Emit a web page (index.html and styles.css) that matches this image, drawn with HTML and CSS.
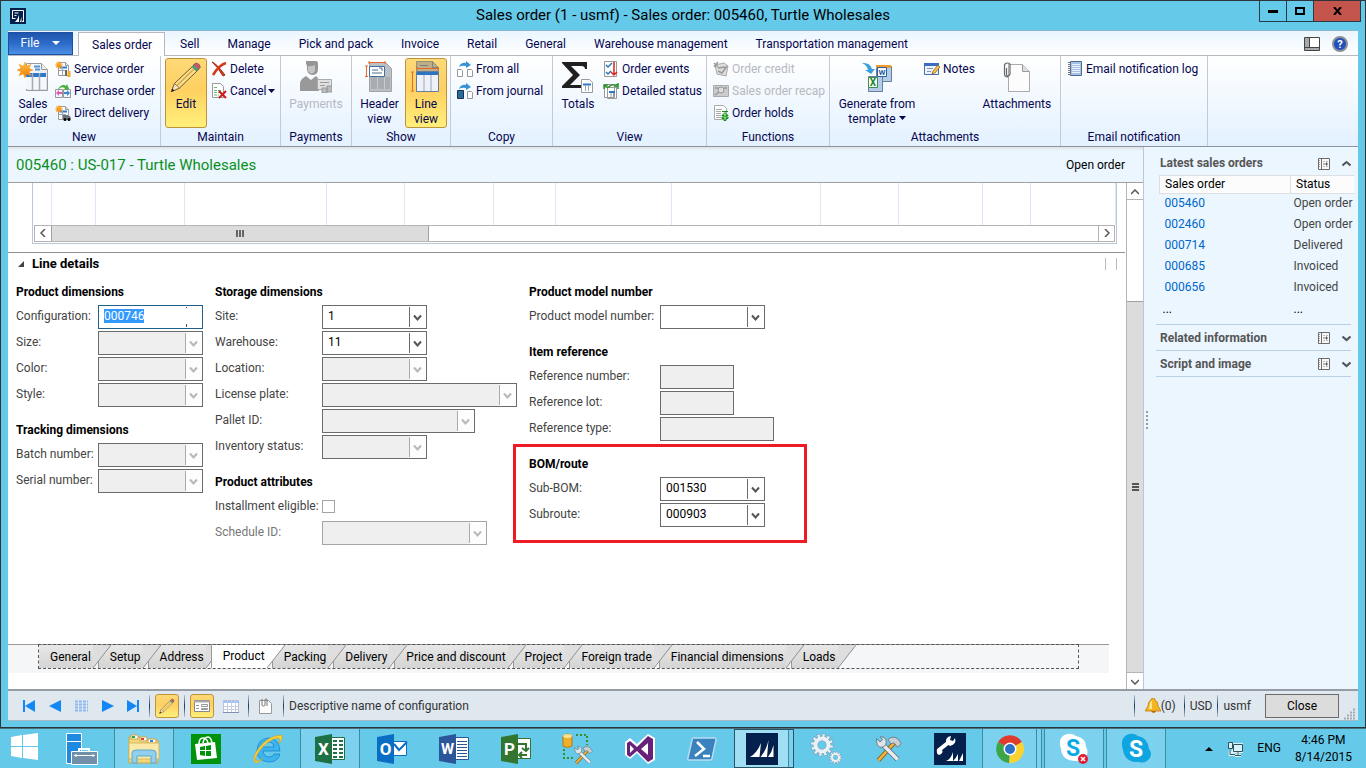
FILE: index.html
```html
<!DOCTYPE html>
<html lang="en">
<head>
    <meta charset="utf-8">
    <title>Sales order (1 - usmf) - Sales order: 005460, Turtle Wholesales</title>
    <link rel="stylesheet" href="styles.css">
</head>
<body>
    <!-- shared icons -->
    <svg class="sprite" width="0" height="0">
        <defs>
            <linearGradient id="orange" x1="0" y1="0" x2="0" y2="1"><stop offset="0" stop-color="#ffc04a"/><stop offset="1" stop-color="#f07c00"/></linearGradient>
            <linearGradient id="paper" x1="0" y1="0" x2="1" y2="1"><stop offset="0" stop-color="#fff"/><stop offset="1" stop-color="#d9dde6"/></linearGradient>
        </defs>
        <symbol id="page" viewBox="0 0 16 16"><path d="M3.500 1.500h7l3 3v10h-10z" fill="#fdfdfd" stroke="#9a9a9a"/><path d="M10.500 1.500v3h3" fill="#ddd" stroke="#9a9a9a"/></symbol>
        <symbol id="star" viewBox="0 0 16 16"><path d="M8 0l1.700 4.200L14 2.300l-1.900 4L16 8l-3.900 1.700 1.900 4-4.300-1.900L8 16l-1.700-4.200L2 13.700l1.900-4L0 8l3.900-1.700L2 2.300l4.300 1.900z" fill="url(#orange)" stroke="#f59a1b" stroke-width=".5"/></symbol>
        <symbol id="pencil" viewBox="0 0 32 32"><path d="M1.500 30.500l3-8L24 4q4 0 5 4L9.500 27z" fill="#fbe08a" stroke="#6b5433"/><path d="M7 24.500L25 7" stroke="#d9a548" stroke-width="1.500"/><path d="M4.500 22.500l5 4.500-8 3.500z" fill="#f7e3bd" stroke="#6b5433" stroke-width=".7"/><path d="M1 31l1.300-3.500 2.200 2z" fill="#222"/><path d="M23.500 4l2-2q4 0 5 4l-2 2.500z" fill="#c8596a" stroke="#8a3a48" stroke-width=".6"/><path d="M21.500 6l2-2 5 4.500-2 2z" fill="#4f9a74"/></symbol>
        <symbol id="gear" viewBox="0 0 24 24"><circle cx="12" cy="12" r="9.500" fill="none" stroke="#7d94a5" stroke-width="4" pathLength="24" stroke-dasharray="1.300 .7"/><circle cx="12" cy="12" r="6.500" fill="none" stroke="#7d94a5" stroke-width="5"/><circle cx="12" cy="12" r="9" fill="none" stroke="#eaf1f6" stroke-width="4" pathLength="24" stroke-dasharray=".9 1.100" stroke-dashoffset="-.2"/><circle cx="12" cy="12" r="6.500" fill="none" stroke="#eaf1f6" stroke-width="4"/></symbol>
        <symbol id="tools" viewBox="0 0 32 32"><path d="M5 29L24 8" stroke="#8a5a10" stroke-width="5"/><path d="M5 29L23 9" stroke="#f0b43c" stroke-width="3"/><path d="M16 5q6-5 12 0l3 5-4 4-4-5-4 1z" fill="#c9d0d8" stroke="#6a737d"/><path d="M9 10l18 18" stroke="#66717c" stroke-width="6"/><path d="M9 10l18 18" stroke="#e7ebef" stroke-width="4"/><path d="M3 8V4l4 4 3-3-3-3q7 0 7 6t-7 6q-4-1-4-6z" fill="#dfe4e9" stroke="#66717c"/></symbol>
        <symbol id="panel" viewBox="0 0 12 12"><path d="M.5.5h11v11H.5z" fill="#f8f8f8" stroke="#6c6c6c"/><path d="M3.500 0v12" stroke="#6c6c6c"/><path d="M1.500 2v8" stroke="#aaa" stroke-dasharray="1 1"/><path d="M5 3.500h5M5 8.500h5" stroke="#bbb" stroke-dasharray="2 1"/><path d="M5 6h3" stroke="#777"/><path d="M8 4l2 2-2 2z" fill="#555"/></symbol>
        <symbol id="down" viewBox="0 0 9 7"><path d="M.5 1.500l4 3.500 4-3.500" fill="none" stroke="#555" stroke-width="2.200"/></symbol>
        <symbol id="ax" viewBox="0 0 32 32"><path d="M0 0h32v32H0z" fill="#04204c"/><path d="M4 24q7-4 11-14l-1.500 14zM14.500 24q6-7 8-17l-1.500 17zM22 24q4-5 5.500-12V24zM4 25h23.500" fill="#fff"/></symbol>
    </svg>

    <div class="window">
        <header class="titlebar">
            <svg class="app-icon" width="16" height="16" viewBox="0 0 16 16"><path d="M0 0h16v16H0z" fill="#04204c"/><path d="M2.500 11V2.500h11V11M4.500 5h4M4.500 7.500h2M2.500 10.500h3" fill="none" stroke="#fff"/><path d="M5 14q3-3 4-7v7zM10 14l1.500-5V14zM12 14l2-4v4z" fill="#fff"/></svg>
            <h1 class="title">Sales order (1 - usmf) - Sales order: 005460, Turtle Wholesales</h1>
            <div class="window-buttons">
                <button type="button" aria-label="Minimize"><svg width="10" height="10"><path d="M0 5h10v3H0z"/></svg></button>
                <button type="button" aria-label="Maximize"><svg width="10" height="8"><path d="M1 1h8v6H1z" fill="none" stroke="#000" stroke-width="2"/></svg></button>
                <button type="button" class="close-window" aria-label="Close window"><svg width="9" height="8" viewBox="0 0 9 8"><path d="M1 0l7 8M8 0L1 8" stroke="#000" stroke-width="2"/></svg></button>
            </div>
        </header>

        <div class="client">
            <nav class="ribbon-tabs">
                <button type="button" class="file-tab">File <svg width="8" height="4"><path d="M0 0h8L4 4z" fill="#fff"/></svg></button>
                <button type="button" class="tab active">Sales order</button>
                <button type="button" class="tab">Sell</button>
                <button type="button" class="tab">Manage</button>
                <button type="button" class="tab">Pick and pack</button>
                <button type="button" class="tab">Invoice</button>
                <button type="button" class="tab">Retail</button>
                <button type="button" class="tab">General</button>
                <button type="button" class="tab">Warehouse management</button>
                <button type="button" class="tab">Transportation management</button>
                <div class="tabs-right">
                    <button type="button" class="plain" aria-label="Layout"><svg width="16" height="14"><path d="M.5.500h15v13H.5z" fill="#fff" stroke="#444"/><path d="M1 1h4v9H1zM1 11h14v2H1z" fill="#a6a9ad"/><path d="M5.500 0v10M0 10.500h16" stroke="#444"/></svg></button>
                    <button type="button" class="plain" aria-label="Help"><svg width="16" height="16"><circle cx="8" cy="8" r="7" fill="#2350b8" stroke="#8a8f99" stroke-width="2"/><text x="8" y="12" text-anchor="middle" font-size="11" font-weight="bold" fill="#fff">?</text></svg></button>
                </div>
            </nav>

            <div class="ribbon">
                <section class="group group-new">
                    <div class="group-body">
                        <button type="button" class="big"><svg width="32" height="32"><path d="M9.500 2.500h15l6 6v21h-21z" fill="url(#paper)" stroke="#9b9b9b"/><path d="M24.500 2.500v6h6" fill="#eee" stroke="#9b9b9b"/><path d="M17 5.500h6M18 8.500h5" stroke="#4d93d8" stroke-width="2"/><path d="M9 12h20v4H9z" fill="#2b78c8"/><path d="M9 16h20v12H9z" fill="#f4f7fb"/><path d="M15.500 12v17M22.500 12v17" stroke="#a4acb8" stroke-width="1.500"/><use href="#star" x="0" y="1" width="16" height="16"/></svg><span>Sales<br>order</span></button>
                        <div class="stack">
                            <button type="button" class="small"><svg width="16" height="16"><use href="#page"/><path d="M5 6.500h7" stroke="#2b78c8" stroke-width="2"/><path d="M7.500 6v8M4 9.500h7" stroke="#9aa4b2"/><use href="#star" width="8" height="8"/><path d="M11 9v6" stroke="#666" stroke-width="2"/><path d="M14 10v6" stroke="#eab02c" stroke-width="3"/></svg>Service order</button>
                            <button type="button" class="small"><svg width="16" height="16"><path d="M.5 6.500h7v8h-7zM8.500 6.500h7v8h-7z" fill="#f5f5f8" stroke="#999"/><path d="M3 6q4-6 8-3l1-2 2 5-5 1 1-2q-4-2-6 1z" fill="#48ae3a"/><path d="M1 10l3-3v2h3v2H4v2z" fill="#e05bb8"/><path d="M9 9h3V7l3 3-3 3v-2H9z" fill="#3388d0"/></svg>Purchase order</button>
                            <button type="button" class="small"><svg width="16" height="16"><use href="#page"/><path d="M5 6.500h7" stroke="#2b78c8" stroke-width="2"/><path d="M7.500 6v8M4 9.500h7" stroke="#9aa4b2"/><use href="#star" width="8" height="8"/><path d="M8 10h5v4H8zM13 11h2l1 3h-3z" fill="#6f747c"/><circle cx="10" cy="14.500" r="1.500"/><circle cx="14" cy="14.500" r="1.500"/></svg>Direct delivery</button>
                        </div>
                    </div>
                    <h2>New</h2>
                </section>
                <section class="group group-maintain">
                    <div class="group-body">
                        <button type="button" class="big pressed"><svg width="32" height="32"><use href="#pencil"/></svg><span>Edit</span></button>
                        <div class="stack">
                            <button type="button" class="small"><svg width="16" height="16"><path d="M1 1q4 1 13 13l-2 1Q6 5 1 1z" fill="#d63a1c" stroke="#a82a14"/><path d="M15 2Q8 4 2 14" fill="none" stroke="#d63a1c" stroke-width="2.500"/></svg>Delete</button>
                            <button type="button" class="small"><svg width="16" height="16"><path d="M1.500.500h8l3 3v11h-11z" fill="#fff" stroke="#999"/><path d="M3 4.500h4M3 7.500h7M3 9.500h7M3 12h5" stroke="#6db56b" stroke-dasharray="3 1"/><path d="M8 8l7 7M15 8l-7 7" stroke="#d11a1a" stroke-width="2"/></svg>Cancel<svg class="arrow" width="7" height="4"><path d="M0 0h7L3.500 4z"/></svg></button>
                        </div>
                    </div>
                    <h2>Maintain</h2>
                </section>
                <section class="group group-payments">
                    <div class="group-body">
                        <button type="button" class="big wide" disabled><svg width="32" height="32"><path d="M6 0h10q2 0 2 3v5q0 6-6 6-5-1-5-6 0-5-1-5z" fill="#969696"/><path d="M8 5q3 1 7-1v6q-3 5-7 0z" fill="#c4c4c4"/><path d="M0 30V23q0-5 6-8l5 4 5-4q3 2 3 8v7z" fill="#999"/><path d="M17.500 18.500h14v10h-14z" fill="#e1e1e1" stroke="#aaa"/><path d="M20 21.500h9M20 24.500h5" stroke="#999"/><path d="M22 27h5v5h-5zM27 25h5v6h-5z" fill="#bbb" stroke="#999"/></svg><span>Payments</span></button>
                    </div>
                    <h2>Payments</h2>
                </section>
                <section class="group group-show">
                    <div class="group-body">
                        <button type="button" class="big medium"><svg width="32" height="32"><path d="M5.500 1.500h16l6 6v23h-22z" fill="#bcc0c5" stroke="#a0a4a8"/><path d="M7 16h19v12H7z" fill="#a8adb3"/><path d="M13.500 16v12M20.500 16v12" stroke="#c7cacf"/><path d="M5.500 5.500h15v10h-15z" fill="#fff" stroke="#446f9d"/><path d="M8 9h6M8 12h10M15 7h3v3" stroke="#446f9d" fill="none"/><path d="M5 1.500h16M5 0v3M21 0v3M2.500 5v10M1 5h3M1 15.500h3" stroke="#e8682c"/></svg><span>Header<br>view</span></button>
                        <button type="button" class="big pressed"><svg width="32" height="32"><path d="M6.500.500h16l6 6v23h-22z" fill="#bdae88" stroke="#99906f"/><path d="M10 4.500h8M22.500.500v6h6" stroke="#77818a" fill="none"/><path d="M6.500 10.500h22v20h-22z" fill="#eef1f8" stroke="#667d9f"/><path d="M7 11h21v3H7z" fill="#2c73c0"/><path d="M14 14v16M21 14v16" stroke="#9aa5bb"/><path d="M7 7.500h21M7.500 6v3M28 6v3M2.500 11v19M1 11h3M1 30h3" stroke="#e8682c"/></svg><span>Line<br>view</span></button>
                    </div>
                    <h2>Show</h2>
                </section>
                <section class="group group-copy">
                    <div class="group-body">
                        <div class="stack">
                            <button type="button" class="small"><svg width="16" height="16"><path d="M.5 8.500h4l1 1v6h-5zM10.500 8.500h4l1 1v6h-5z" fill="#fff" stroke="#999"/><path d="M2 6q2-5 7-4V0l5 4-5 3V5Q5 4 2 6z" fill="#3593d4"/></svg>From all</button>
                            <button type="button" class="small"><svg width="16" height="16"><path d="M.5 7.500h6v8h-6z" fill="#246d9e" stroke="#1a3450"/><path d="M10.500 8.500h4l1 1v6h-5z" fill="#fff" stroke="#999"/><path d="M2 6q2-5 7-4V0l5 4-5 3V5Q5 4 2 6z" fill="#3593d4"/></svg>From journal</button>
                        </div>
                    </div>
                    <h2>Copy</h2>
                </section>
                <section class="group group-view">
                    <div class="group-body">
                        <button type="button" class="big"><svg width="32" height="32"><path d="M0 1h25v7h-2q0-3-4-3H9l9 9L8 24h12v3H0v-2l11-11L0 2z" fill="#202020"/><path d="M19.500 18.500h8l3 3v10h-11z" fill="#fff" stroke="#999"/><path d="M21 23.500h8" stroke="#2b78c8" stroke-width="2"/><path d="M23.500 24v6M26.500 24v6" stroke="#9aa4b2"/></svg><span>Totals</span></button>
                        <div class="stack">
                            <button type="button" class="small"><svg width="16" height="16"><path d="M1.500.500h12v15h-12z" fill="#fff" stroke="#999"/><path d="M3 4l2 2 4-4M3 11l2 2 3-3" fill="none" stroke="#2479bd" stroke-width="1.500"/><path d="M11 1v12M8 11l3 3 3-3" fill="none" stroke="#d22" stroke-width="1.500"/></svg>Order events</button>
                            <button type="button" class="small"><svg width="16" height="16"><path d="M1.500 1.500h10v13h-10zM4.500 4.500h9v11h-9z" fill="#fff" stroke="#999"/><path d="M6 9h6" stroke="#2b78c8" stroke-width="2"/><path d="M8 10v4M10.500 10v4" stroke="#999"/><path d="M1 2q3 4 6 1t7 1M1 6V2h4M15 6V1l-4 2" fill="none" stroke="#2f8f2b" stroke-width="1.500"/></svg>Detailed status</button>
                        </div>
                    </div>
                    <h2>View</h2>
                </section>
                <section class="group group-functions">
                    <div class="group-body">
                        <div class="stack">
                            <button type="button" class="small" disabled><svg width="16" height="16"><path d="M2 4l9-2 4 3-2 10-9-2z" fill="#ddd" stroke="#aaa"/><path d="M5 7l7-1M5 10l4 2 5-7M1 2l4 4M5 1L1 6" fill="none" stroke="#999" stroke-width="1.500"/></svg>Order credit</button>
                            <button type="button" class="small" disabled><svg width="16" height="16"><path d="M.5 2.500h15v11H.5z" fill="#ccc" stroke="#aaa"/><circle cx="8" cy="7" r="3" fill="#ddd" stroke="#999"/><path d="M6 9l-4 3M11 5h3M2 5h3" stroke="#999" stroke-width="1.500"/></svg>Sales order recap</button>
                            <button type="button" class="small"><svg width="16" height="16"><path d="M1.500.500h9l3 3v11h-12z" fill="#fff" stroke="#aaa"/><path d="M3 4.500h6M3 6.500h5M3 8.500h5M3 10.500h5M3 12.500h5" stroke="#aaa"/><path d="M9 6.500h6M12 7.500l3 3h-2v1.500h2v1.500h-2v2h-2v-2H9V12h2v-1.500H9z" fill="#7fe07a" stroke="#178a17"/></svg>Order holds</button>
                        </div>
                    </div>
                    <h2>Functions</h2>
                </section>
                <section class="group group-attachments">
                    <div class="group-body">
                        <button type="button" class="big generate"><svg width="32" height="32"><path d="M15.500 5.500h15v15h-15z" fill="#b4cce6" stroke="#667fa3"/><path d="M15 4h15v3H15z" fill="#f39a2b"/><path d="M7.500 15.500h14v15h-14z" fill="#b4cce6" stroke="#667fa3"/><path d="M16.500 6.500h9v9h-9z" fill="#fff" stroke="#2d5fa5"/><path d="M7.500 16.500h9v10h-9z" fill="#fff" stroke="#38914a"/><text x="21" y="14" text-anchor="middle" font-size="8" font-weight="bold" fill="#2d5fa5">W</text><text x="12" y="25" text-anchor="middle" font-size="10" font-weight="bold" fill="#23842f">X</text><path d="M1 2q8-1 10 6h3l-4 5-6-4h3Q6 4 1 2z" fill="#3c9fdd"/></svg><span>Generate from<br>template <svg class="arrow" width="7" height="4"><path d="M0 0h7L3.500 4z"/></svg></span></button>
                        <div class="stack">
                            <button type="button" class="small"><svg width="16" height="16"><path d="M.5 2.500h14v11H.5z" fill="#eef2fb" stroke="#4b6da8"/><path d="M0 2h15v3H0z" fill="#3a6cc0"/><path d="M3 7.500h6M3 10.500h4" stroke="#8297bd"/><path d="M8 13l1-3 5-6 2 2-5 6z" fill="#f2c24a" stroke="#7c5a1c" stroke-width=".7"/></svg>Notes</button>
                        </div>
                        <button type="button" class="big attach"><svg width="32" height="32"><path d="M7.500 3.500h14l7 7v20h-21z" fill="#fcfcfc" stroke="#aaa"/><path d="M21.500 3.500v7h7" fill="#ddd" stroke="#999"/><path d="M5.500 7v6q0 2 1.500 2t2-2V4q0-2-2.500-2T3.500 4v9q0 3 3.500 3" fill="none" stroke="#666" stroke-width="1.200"/></svg><span>Attachments</span></button>
                    </div>
                    <h2>Attachments</h2>
                </section>
                <section class="group group-email">
                    <div class="group-body">
                        <div class="stack">
                            <button type="button" class="small"><svg width="16" height="16"><path d="M3.500.500h11v14h-11z" fill="#a8c2e4" stroke="#4d6a98"/><path d="M5 3.500h8M5 5.500h8M5 7.500h8M5 9.500h8M5 11.500h8" stroke="#e9f1fb"/><path d="M2.500 1v14" stroke="#777" stroke-width="3" stroke-dasharray="1 1"/></svg>Email notification log</button>
                        </div>
                    </div>
                    <h2>Email notification</h2>
                </section>
            </div>

            <div class="workspace">
                <main class="form">
                    <div class="record-header">
                        <span class="record-title">005460 : US-017 - Turtle Wholesales</span>
                        <span>Open order</span>
                    </div>
                    <div class="form-scroll">
                        <div class="form-body">
                            <div class="lines">
                                <table class="line-grid" aria-label="Sales order lines">
                                    <colgroup><col class="c18"><col class="c44"><col class="c89"><col class="c142"><col class="c78"><col class="c89"><col class="c62"><col class="c116"><col class="c149"><col class="c78"><col class="c84"><col class="c48"><col></colgroup>
                                    <tr><td></td><td></td><td></td><td></td><td></td><td></td><td></td><td></td><td></td><td></td><td></td><td></td><td></td></tr>
                                </table>
                                <div class="hscroll">
                                    <button type="button" aria-label="Scroll left"><svg width="6" height="8"><path d="M5 0L1 4l4 4" fill="none" stroke="#555" stroke-width="1.500"/></svg></button>
                                    <div class="hthumb"><svg width="8" height="7"><path d="M1 0v7M4 0v7M7 0v7" stroke="#666" stroke-width="2"/></svg></div>
                                    <button type="button" class="end" aria-label="Scroll right"><svg width="6" height="8"><path d="M1 0l4 4-4 4" fill="none" stroke="#555" stroke-width="1.500"/></svg></button>
                                </div>
                            </div>

                            <div class="details-head">
                                <svg width="6" height="6"><path d="M6 0v6H0z" fill="#444"/></svg>
                                <h2>Line details</h2>
                                <span class="marks"></span>
                            </div>

                            <form class="fields">
                                <div class="column col-product">
                                    <fieldset>
                                        <legend>Product dimensions</legend>
                                        <div class="row"><label for="configuration">Configuration:</label><input id="configuration" class="box current" type="text" value="000746"></div>
                                        <div class="row"><label for="size">Size:</label><select id="size" class="box" disabled></select></div>
                                        <div class="row"><label for="color">Color:</label><select id="color" class="box" disabled></select></div>
                                        <div class="row"><label for="style">Style:</label><select id="style" class="box" disabled></select></div>
                                    </fieldset>
                                    <fieldset>
                                        <legend>Tracking dimensions</legend>
                                        <div class="row"><label for="batch">Batch number:</label><select id="batch" class="box" disabled></select></div>
                                        <div class="row"><label for="serial">Serial number:</label><select id="serial" class="box" disabled></select></div>
                                    </fieldset>
                                </div>
                                <div class="column col-storage">
                                    <fieldset>
                                        <legend>Storage dimensions</legend>
                                        <div class="row"><label for="site">Site:</label><select id="site" class="box"><option>1</option></select></div>
                                        <div class="row"><label for="warehouse">Warehouse:</label><select id="warehouse" class="box"><option>11</option></select></div>
                                        <div class="row"><label for="location">Location:</label><select id="location" class="box" disabled></select></div>
                                        <div class="row"><label for="plate">License plate:</label><select id="plate" class="box w195" disabled></select></div>
                                        <div class="row"><label for="pallet">Pallet ID:</label><select id="pallet" class="box w153" disabled></select></div>
                                        <div class="row"><label for="inventory">Inventory status:</label><select id="inventory" class="box" disabled></select></div>
                                    </fieldset>
                                    <fieldset>
                                        <legend>Product attributes</legend>
                                        <div class="row"><label for="installment">Installment eligible:</label><input id="installment" class="check" type="checkbox"></div>
                                        <div class="row dim"><label for="schedule">Schedule ID:</label><select id="schedule" class="box w165" disabled></select></div>
                                    </fieldset>
                                </div>
                                <div class="column col-reference">
                                    <fieldset>
                                        <legend>Product model number</legend>
                                        <div class="row"><label for="model">Product model number:</label><select id="model" class="box"></select></div>
                                    </fieldset>
                                    <fieldset>
                                        <legend>Item reference</legend>
                                        <div class="row"><label for="refnumber">Reference number:</label><input id="refnumber" class="box w74" type="text" disabled></div>
                                        <div class="row"><label for="reflot">Reference lot:</label><input id="reflot" class="box w74" type="text" disabled></div>
                                        <div class="row"><label for="reftype">Reference type:</label><input id="reftype" class="box w114" type="text" disabled></div>
                                    </fieldset>
                                    <fieldset class="marked">
                                        <legend>BOM/route</legend>
                                        <div class="row"><label for="subbom">Sub-BOM:</label><select id="subbom" class="box"><option>001530</option></select></div>
                                        <div class="row"><label for="subroute">Subroute:</label><select id="subroute" class="box"><option>000903</option></select></div>
                                    </fieldset>
                                </div>
                            </form>

                            <div class="detail-tabs">
                                <div class="detail-tabs-inner">
                                    <button type="button">General</button>
                                    <button type="button">Setup</button>
                                    <button type="button">Address</button>
                                    <button type="button" class="active">Product</button>
                                    <button type="button">Packing</button>
                                    <button type="button">Delivery</button>
                                    <button type="button">Price and discount</button>
                                    <button type="button">Project</button>
                                    <button type="button">Foreign trade</button>
                                    <button type="button">Financial dimensions</button>
                                    <button type="button">Loads</button>
                                </div>
                            </div>
                        </div>
                        <div class="vscroll">
                            <button type="button" aria-label="Scroll up"><svg width="8" height="6"><path d="M0 5l4-4 4 4" fill="none" stroke="#555" stroke-width="1.500"/></svg></button>
                            <div class="vtrack"></div>
                            <div class="vthumb"><svg width="7" height="8"><path d="M0 1h7M0 4h7M0 7h7" stroke="#555" stroke-width="2"/></svg></div>
                            <button type="button" class="end" aria-label="Scroll down"><svg width="8" height="6"><path d="M0 1l4 4 4-4" fill="none" stroke="#555" stroke-width="1.500"/></svg></button>
                        </div>
                    </div>
                </main>

                <aside class="factbox">
                    <div class="splitter"></div>
                    <div class="facts">
                        <section class="fact">
                            <div class="fact-head"><h2>Latest sales orders</h2><svg width="12" height="12"><use href="#panel"/></svg><svg width="9" height="7"><path d="M.5 5.500l4-3.500 4 3.500" fill="none" stroke="#555" stroke-width="2"/></svg></div>
                            <table class="orders">
                                <thead><tr><th>Sales order</th><th>Status</th></tr></thead>
                                <tbody>
                                    <tr><td><a href="#">005460</a></td><td>Open order</td></tr>
                                    <tr><td><a href="#">002460</a></td><td>Open order</td></tr>
                                    <tr><td><a href="#">000714</a></td><td>Delivered</td></tr>
                                    <tr><td><a href="#">000685</a></td><td>Invoiced</td></tr>
                                    <tr><td><a href="#">000656</a></td><td>Invoiced</td></tr>
                                    <tr class="more"><td>...</td><td>...</td></tr>
                                </tbody>
                            </table>
                        </section>
                        <section class="fact"><div class="fact-head"><h2>Related information</h2><svg width="12" height="12"><use href="#panel"/></svg><svg width="9" height="7"><use href="#down"/></svg></div></section>
                        <section class="fact"><div class="fact-head"><h2>Script and image</h2><svg width="12" height="12"><use href="#panel"/></svg><svg width="9" height="7"><use href="#down"/></svg></div></section>
                    </div>
                </aside>
            </div>

            <footer class="statusbar">
                <div class="record-nav">
                    <button type="button" class="plain" aria-label="First"><svg width="13" height="12"><path d="M0 0h2v12H0zM12 0v12L2 6z" fill="#1287f5"/></svg></button>
                    <button type="button" class="plain" aria-label="Previous"><svg width="13" height="12"><path d="M12 0v12L0 6z" fill="#1287f5"/></svg></button>
                    <button type="button" class="plain" aria-label="Grid"><svg width="13" height="12"><path d="M0 1.500h13M0 4.500h13M0 7.500h13M0 10.500h13" stroke="#8cb9ee" stroke-width="2" stroke-dasharray="3 1"/></svg></button>
                    <button type="button" class="plain" aria-label="Next"><svg width="13" height="12"><path d="M1 0v12l12-6z" fill="#1287f5"/></svg></button>
                    <button type="button" class="plain" aria-label="Last"><svg width="13" height="12"><path d="M0 0v12l10-6zM10 0h2v12h-2z" fill="#1287f5"/></svg></button>
                </div>
                <i class="sep"></i>
                <button type="button" class="tool pressed" aria-label="Edit"><svg width="16" height="16"><use href="#pencil"/></svg></button>
                <i class="sep"></i>
                <button type="button" class="tool pressed" aria-label="Form view"><svg width="16" height="12"><path d="M.5.500h15v11H.5z" fill="#fff" stroke="#888"/><path d="M0 1.500h16" stroke="#aaa" stroke-width="2"/><path d="M2 5.500h3M2 8.500h3M7.500 4.500h6v2h-6zM7.500 8.500h6v1h-6z" fill="none" stroke="#999"/></svg></button>
                <button type="button" class="tool" aria-label="Grid view"><svg width="16" height="13"><path d="M.5.500h15v12H.5z" fill="#fff" stroke="#b6bfd4"/><path d="M0 1h16v2H0z" fill="#9fc3f3"/><path d="M0 6.500h16M0 9.500h16M4.500 0v13M8.500 0v13M12.500 0v13" stroke="#c4cee4"/><path d="M0 12.500h16" stroke="#8290ad"/></svg></button>
                <i class="sep"></i>
                <button type="button" class="tool" aria-label="Documents"><svg width="14" height="16"><path d="M.5 2.500h9l3 3v10H.5z" fill="#fcfcfc" stroke="#999"/><path d="M3 1v6q0 1 1.500 1T6 7V2q0-1 1-1t1 1v6" fill="none" stroke="#777"/></svg></button>
                <i class="sep"></i>
                <span class="help-text">Descriptive name of configuration</span>
                <i class="sep"></i>
                <button type="button" class="plain bell"><svg width="16" height="16"><path d="M8 0q2 0 2 2 3 1 3 6l3 5H0l3-5q0-5 3-6 0-2 2-2z" fill="#f2b624" stroke="#c67b0b" stroke-width=".8"/><path d="M5 5q0-2 2-2v8H4z" fill="#fde78e"/><path d="M6 13h5q-2 4-5 0z" fill="#b96b08"/></svg>(0)</button>
                <i class="sep"></i>
                <span>USD</span>
                <i class="sep"></i>
                <span class="company">usmf</span>
                <button type="button" class="close">Close</button>
                <svg class="grip" width="12" height="12"><path d="M9 1.500h2M6 4.500h5M3 7.500h8M0 10.500h11" stroke="#a4abb5" stroke-width="2" stroke-dasharray="2 1"/></svg>
            </footer>
        </div>
    </div>

    <div class="taskbar">
        <button type="button" class="start" aria-label="Start"><svg width="28" height="28"><path d="M0 4l11-2v11H0zM12 2l15-2v13H12zM0 14h11v11L0 23zM12 14h15v13l-15-2z" fill="#fff"/></svg></button>
        <button type="button" class="task" aria-label="Server manager"><svg width="32" height="32"><path d="M.5.500h15v30H.5z" fill="#1e8be0" stroke="#fff"/><path d="M1 8.500h14" stroke="#fff"/><path d="M13 18v-2h10v2" fill="none" stroke="#fff" stroke-width="2"/><path d="M5.500 18.500h26v13h-26z" fill="#718fa8" stroke="#fff"/><path d="M8 22.500h21M10 21v3M27 21v3" stroke="#fff"/></svg></button>
        <button type="button" class="task open" aria-label="File explorer"><svg width="32" height="32"><path d="M1 4h12l2 3h15v23H1z" fill="#f1d77c" stroke="#c9a64b"/><path d="M3 2h7v4H3zM12 4h7v4h-7zM20 6h8v4h-8z" fill="#fff" stroke="#c9a64b"/><path d="M4 3h3v2H4z" fill="#2ca84d"/><path d="M13 5h3v2h-3z" fill="#d74333"/><path d="M22 7h3v2h-3z" fill="#3585d3"/><path d="M1 10h30v16H1z" fill="#fae9a9" stroke="#d7b961"/><path d="M4 30V20q0-3 4-3h16q4 0 4 3v10h-5v-7H9v7z" fill="#91cfed" stroke="#5ca9ce"/></svg></button>
        <button type="button" class="task" aria-label="Store"><svg width="30" height="30"><path d="M0 0h30v30H0z" fill="#00930b"/><path d="M4 10l20-2 2 16-20 2z" fill="#fff"/><path d="M8 10q0-6 4-6t5 5M12 9q1-6 5-6 3 0 4 6" fill="none" stroke="#fff" stroke-width="1.500"/><path d="M9 13l5-1v4H9zM15 12l5-1v5h-5zM9 17h5v5l-5-1zM15 17h5v5l-5 0z" fill="#00930b"/></svg></button>
        <button type="button" class="task" aria-label="Internet Explorer"><svg width="32" height="32"><path d="M28 18H11q1 6 6 6 4 0 5-3h6q-2 8-11 8Q5 28 5 17 6 6 16 5q11 0 12 13zM11 14h11q-1-5-5.500-5T11 14z" fill="#3bb4ef" stroke="#1a7cc4" stroke-width=".7"/><path d="M4 30Q-2 27 7 15T29 2q3 2-2 9 2-6-1-6Q17 6 8 17q-8 12-3 11 3 0 6-3-4 5-7 5z" fill="#fbd23a" stroke="#d79f13" stroke-width=".6"/></svg></button>
        <button type="button" class="task open" aria-label="Excel"><svg width="32" height="32"><path d="M17.500 4.500h13v22h-13z" fill="#fff" stroke="#1e7145"/><path d="M19 8h4M25 8h4M19 12h4M25 12h4M19 16h4M25 16h4M19 20h4M25 20h4M19 24h4M25 24h4" stroke="#1e7145" stroke-width="2"/><path d="M1 4l17-3v30L1 28z" fill="#1e7145"/><text x="9.500" y="22" text-anchor="middle" font-size="17" font-weight="bold" fill="#fff">X</text></svg></button>
        <button type="button" class="task" aria-label="Outlook"><svg width="32" height="32"><path d="M17.500 8.500h13v14h-13z" fill="#fff" stroke="#0a6fc4"/><path d="M18 11l5 6 8-8" fill="none" stroke="#0a6fc4" stroke-width="2"/><path d="M1 4l17-3v30L1 28z" fill="#0a6fc4"/><text x="9.500" y="22" text-anchor="middle" font-size="17" font-weight="bold" fill="#fff">O</text></svg></button>
        <button type="button" class="task" aria-label="Word"><svg width="32" height="32"><path d="M17.500 4.500h13v22h-13z" fill="#fff" stroke="#2b579a"/><path d="M19 8.500h10M19 11.500h10M19 14.500h10M19 17.500h10M19 20.500h10M19 23.500h10" stroke="#2b579a"/><path d="M1 4l17-3v30L1 28z" fill="#2b579a"/><text x="9.500" y="21" text-anchor="middle" font-size="15" font-weight="bold" fill="#fff">W</text></svg></button>
        <button type="button" class="task" aria-label="Project"><svg width="32" height="32"><path d="M17.500 5.500h13v20h-13z" fill="#fff" stroke="#31752f"/><path d="M18 11h8v6M22 15l4 3 3-3M27 22h-7M22 19l-3 3 3 3" fill="none" stroke="#31752f" stroke-width="2"/><path d="M1 4l17-3v30L1 28z" fill="#31752f"/><text x="9.500" y="22" text-anchor="middle" font-size="17" font-weight="bold" fill="#fff">P</text></svg></button>
        <button type="button" class="task" aria-label="Configuration"><svg width="32" height="32"><path d="M14 2h11v10M2 16v9h10" fill="none" stroke="#3c8c27" stroke-width="2" stroke-dasharray="2 2"/><path d="M1 3q4-4 9 0v10q-5 3-9 0z" fill="#edb02a" stroke="#b47a10"/><ellipse cx="5.500" cy="3" rx="4.500" ry="2" fill="#fbe08b"/><use href="#tools" x="10" y="12" width="22" height="20"/></svg></button>
        <button type="button" class="task" aria-label="Visual Studio"><svg width="32" height="32"><path d="M1 9l5-4 7 6L24 1l7 4v22l-7 4-11-11-7 6-5-4z" fill="#fff"/><path d="M3 10l3-2 7 6L24 3l5 3v20l-5 3-11-11-7 6-3-2zM6 12v8l4-4zM24 10l-7 6 7 6z" fill="#68217a" fill-rule="evenodd"/></svg></button>
        <button type="button" class="task" aria-label="PowerShell"><svg width="30" height="26"><path d="M6 2h22q1 0 1 2l-4 18q0 2-2 2H2q-2 0-1-2L5 4q0-2 1-2z" fill="#3a82bd" stroke="#b9dcf2" stroke-width="1.500"/><path d="M10 6l7 7-9 7M16 20h7" fill="none" stroke="#fff" stroke-width="2.500"/></svg></button>
        <button type="button" class="task active stacked" aria-label="Dynamics AX"><svg width="32" height="32"><use href="#ax"/></svg></button>
        <button type="button" class="task" aria-label="Services"><svg width="32" height="32"><use href="#gear" x="0" y="0" width="24" height="24"/><use href="#gear" x="19" y="18" width="13" height="13"/></svg></button>
        <button type="button" class="task" aria-label="Tools"><svg width="30" height="28"><use href="#tools"/></svg></button>
        <button type="button" class="task" aria-label="AX configuration"><svg width="32" height="32"><path d="M0 0h32v32H0z" fill="#04204c"/><path d="M5 17L15 9" stroke="#fff" stroke-width="4"/><path d="M12 10q-1-6 5-7l-1 4 3 1 2-3q2 6-5 8zM3 16q3-2 5 1t-3 5q-3-1-2-6z" fill="#fff"/><path d="M12 28q5-2 7-9v9zM19 28q3-3 5-7v7zM25 28l4-8v8z" fill="#fff"/></svg></button>
        <button type="button" class="task open stacked" aria-label="Chrome"><svg width="28" height="28"><path d="M14 14L2 7A14 14 0 0 1 26 7z" fill="#df3c2d"/><path d="M14 14L26 7A14 14 0 0 1 13 28z" fill="#fbd22f"/><path d="M14 14l-1 14A14 14 0 0 1 2 7z" fill="#3ba548"/><circle cx="14" cy="14" r="6.500" fill="#fff"/><circle cx="14" cy="14" r="5" fill="#2d72c9"/></svg></button>
        <button type="button" class="task open" aria-label="Skype offline"><svg width="32" height="32"><path d="M9 1q5-1 9 2 10 2 10 11 3 5 0 10t-10 4Q4 28 3 16-1 4 9 1z" fill="#fff"/><text x="15" y="23" text-anchor="middle" font-size="23" font-weight="bold" fill="#0baae8">S</text><circle cx="25" cy="26" r="5" fill="#e21b35"/><path d="M23 24l4 4M27 24l-4 4" stroke="#fff" stroke-width="1.500"/></svg></button>
        <button type="button" class="task open" aria-label="Skype"><svg width="32" height="32"><path d="M9 1q5-1 9 2 10 2 11 13 4 5 0 10t-10 3Q5 30 3 17-1 4 9 1z" fill="#0ea5e0"/><text x="16" y="24" text-anchor="middle" font-size="23" font-weight="bold" fill="#fff">S</text></svg></button>
        <div class="tray">
            <svg width="8" height="4"><path d="M0 4h8L4 0z"/></svg>
            <svg width="16" height="16"><path d="M6.500 3.500h9v7h-9zM8 14.500h6M11 11v3M3 9v4.500h5" fill="#84d3ee" stroke="#fff" stroke-width="2.500"/><path d="M6.500 3.500h9v7h-9zM8 14.500h6M11 11v3M3 9v4.500h5M1.500 1.500h4v6h-4z" fill="#d8f2fb" stroke="#32505e"/></svg>
            <span>ENG</span>
            <time>4:46 PM<br>8/14/2015</time>
        </div>
    </div>
    <script>
        let field = document.getElementById('configuration');
        field.focus();
        field.select();
    </script>
</body>
</html>
```
FILE: styles.css
```css
* {
    box-sizing: border-box;
}
body {
    margin: 0;
    min-height: 100vh;
    display: flex;
    flex-direction: column;
    font: 12px/15px Roboto, "Open Sans", sans-serif;
    color: #000;
    background: #65c9ea;
}
h1, h2 {
    margin: 0;
    font-size: 12px;
    font-weight: normal;
}
button, input, select {
    font: inherit;
    color: inherit;
}
button {
    border: 0;
    padding: 0;
    background: none;
    white-space: nowrap;
}
svg {
    flex: none;
}
.sprite {
    position: absolute;
}

/* window frame */
.window {
    flex: 1;
    display: flex;
    flex-direction: column;
    border: 1px solid #2e3439;
    padding: 0 7px 6px;
}
.titlebar {
    height: 29px;
    display: grid;
    grid-template-columns: 1fr auto 1fr;
    align-items: center;
}
.app-icon {
    margin-left: 2px;
}
.title {
    font-size: 15px;
}
.window-buttons {
    justify-self: end;
    align-self: start;
    display: flex;
    margin-right: -3px;
    border: 1px solid #263d46;
    border-top: 0;
}
.window-buttons button {
    width: 27px;
    height: 20px;
    border-right: 1px solid #263d46;
}
.window-buttons .close-window {
    width: 46px;
    border-right: 0;
    background: #c3554d;
}
.client {
    flex: 1;
    display: flex;
    flex-direction: column;
    border-top: 1px solid #8ab9cc;
    background: #fff;
}

/* ribbon */
.ribbon-tabs {
    height: 25px;
    display: flex;
    align-items: flex-end;
    gap: 1px;
    padding-top: 1px;
    border-bottom: 1px solid #b4b9bf;
    background: linear-gradient(#eaf5ff, #fff);
    color: #06064f;
}
.file-tab {
    width: 65px;
    height: 23px;
    margin-right: 4px;
    border: 1px solid #1f4fa5;
    background: linear-gradient(#1f56ad, #2d6bc9 50%, #4c8fe4);
    color: #fff;
}
.file-tab svg {
    margin-left: 10px;
    vertical-align: 2px;
}
.tab {
    height: 24px;
    padding: 2px 13px 0 14px;
}
.tab.active {
    margin-bottom: -1px;
    border: 1px solid #b4b9bf;
    border-bottom: 0;
    padding: 1px 12px 0 13px;
    background: #fff;
}
.tabs-right {
    margin-left: auto;
    align-self: center;
    display: flex;
    align-items: center;
    gap: 12px;
    padding-right: 10px;
}
.plain {
    display: flex;
    align-items: center;
}
.ribbon {
    display: flex;
    height: 91px;
    border-bottom: 1px solid #8b939b;
    background: linear-gradient(#fff, #e3f1ff);
    color: #06064f;
}
.group {
    display: flex;
    flex-direction: column;
    justify-content: space-between;
    padding: 2px 0 1px 4px;
    border-right: 1px solid #c3cad1;
}
.group h2 {
    padding-right: 4px;
    text-align: center;
}
.group-new { width: 153px; }
.group-maintain { width: 120px; }
.group-payments { width: 71px; }
.group-show { width: 99px; }
.group-copy { width: 102px; }
.group-view { width: 154px; }
.group-functions { width: 123px; }
.group-attachments { width: 231px; }
.group-email { width: 147px; }
.group-body {
    display: flex;
    gap: 2px;
}
.big {
    display: flex;
    flex-direction: column;
    align-items: center;
    gap: 4px;
    min-width: 42px;
    height: 70px;
    padding-top: 3px;
}
.big.medium { width: 47px; }
.big.wide { width: 62px; }
.big.generate { width: 86px; }
.big.attach { width: 80px; }
.big .arrow {
    vertical-align: 3px;
}
.pressed {
    border: 1px solid #c0933a;
    border-radius: 3px;
    background: linear-gradient(#fdd978, #fed061 45%, #fff07a);
}
.big.pressed {
    padding-top: 2px;
}
.small {
    display: flex;
    align-items: center;
    gap: 3px;
    height: 22px;
    padding-left: 2px;
}
.group-new .group-body {
    gap: 0;
}
.group-new .small {
    padding-left: 1px;
}
.small .arrow {
    margin-left: -2px;
}
.arrow {
    fill: #06064f;
}
.ribbon button:disabled {
    color: #b5b9bf;
}

/* form */
.workspace {
    flex: 1;
    display: flex;
}
.form {
    flex: 1;
    display: flex;
    flex-direction: column;
    border-right: 1px solid #b9c7d8;
}
.record-header {
    height: 36px;
    display: flex;
    justify-content: space-between;
    align-items: center;
    padding: 2px 18px 0 8px;
    border-bottom: 1px solid #a0a0a0;
    background: linear-gradient(#dde2e6, #ebf6ff 4px);
}
.record-title {
    font-size: 15px;
    color: #0a8f1c;
}
.form-scroll {
    flex: 1;
    display: flex;
}
.form-body {
    flex: 1;
    display: flex;
    flex-direction: column;
    padding-bottom: 16px;
}
.lines {
    margin: 0 9px 0 24px;
    border: 1px solid #b9c7d8;
    border-top: 0;
}
.line-grid {
    width: 100%;
    height: 42px;
    table-layout: fixed;
    border-collapse: collapse;
}
.line-grid td {
    padding: 0;
    border-right: 1px solid #dce8f5;
}
.c18 { width: 18px; }
.c44 { width: 44px; }
.c48 { width: 48px; }
.c62 { width: 62px; }
.c78 { width: 78px; }
.c84 { width: 84px; }
.c89 { width: 89px; }
.c116 { width: 116px; }
.c142 { width: 142px; }
.c149 { width: 149px; }
.hscroll {
    display: flex;
    height: 17px;
    margin: 0 1px 1px;
    border: 1px solid #b4b4b4;
}
.hscroll button {
    width: 16px;
}
.hscroll .end {
    margin-left: auto;
    border-left: 1px solid #b4b4b4;
}
.hthumb {
    width: 35%;
    display: flex;
    align-items: center;
    justify-content: center;
    border: solid #a0a0a0;
    border-width: 0 1px;
    background: #dcdcdc;
}
.details-head {
    display: flex;
    align-items: center;
    gap: 8px;
    height: 22px;
    margin: 8px 1px 0 0;
    padding-left: 10px;
    border-top: 1px solid #8f8f8f;
}
.details-head h2 {
    flex: 1;
    font-size: 13px;
    font-weight: bold;
}
.marks {
    width: 12px;
    height: 12px;
    margin-right: 8px;
    border: solid #bbb;
    border-width: 0 1px;
}
.fields {
    flex: 1;
    display: flex;
    padding: 8px 8px 0;
}
.col-product {
    width: 199px;
    --label: 82px;
}
.col-storage {
    width: 314px;
    --label: 107px;
}
.col-reference {
    --label: 131px;
}
fieldset {
    display: flex;
    flex-direction: column;
    min-width: 0;
    margin: 0 0 11px;
    border: 0;
    padding: 0;
}
legend {
    height: 23px;
    padding: 0;
    line-height: 20px;
    font-weight: bold;
}
.row {
    display: flex;
    align-items: flex-start;
    height: 26px;
}
.row label {
    width: var(--label);
    flex: none;
    line-height: 22px;
    color: #444;
    white-space: nowrap;
}
.box {
    width: 105px;
    height: 24px;
    margin: 0;
    border: 1px solid #6b6b6b;
    border-radius: 0;
    padding: 0 5px 2px;
    background: #fff;
    color: #000;
    opacity: 1;
}
select.box {
    appearance: none;
    background: #fff url("data:image/svg+xml,%3Csvg xmlns='http://www.w3.org/2000/svg' width='17' height='20'%3E%3Cpath d='M.5 0v20' stroke='%236b6b6b'/%3E%3Cpath d='M5 8.500l3.500 4 3.500-4' fill='none' stroke='%23555' stroke-width='2'/%3E%3C/svg%3E") no-repeat right 1px;
}
.box:disabled {
    background-color: #efefef;
}
select.box:disabled {
    background-image: url("data:image/svg+xml,%3Csvg xmlns='http://www.w3.org/2000/svg' width='17' height='22'%3E%3Cpath d='M0 0h17v22H0z' fill='%23fdfdfd'/%3E%3Cpath d='M.5 1v20' stroke='%23aaa'/%3E%3Cpath d='M5 9.500l3.500 4 3.500-4' fill='none' stroke='%23b8b8b8' stroke-width='2'/%3E%3C/svg%3E");
    background-position: right 0;
}
.w74 { width: 74px; }
.w114 { width: 114px; }
.w153 { width: 153px; }
.w165 { width: 165px; }
.w195 { width: 195px; }
.box.current {
    outline: none;
    border-color: #1f5f8c;
    background: linear-gradient(#555, #555) 87px 1px / 1px 1px no-repeat, linear-gradient(#555, #555) 87px 18px / 1px 3px no-repeat, #fff;
}
.box.current::selection {
    background: #3399ff;
    color: #fff;
}
.check {
    appearance: none;
    width: 13px;
    height: 13px;
    margin: 5px 0 0;
    border: 1px solid #a5a5a5;
    background: #fff;
}
.dim label {
    color: #777;
}
.dim .box {
    border-color: #a5a5a5;
}
/* red frame around the BOM/route fields */
.marked {
    position: relative;
}
.marked::before {
    content: "";
    position: absolute;
    inset: -33px -33px -14px -16px;
    border: 3px solid #ed1c24;
    pointer-events: none;
}

/* slanted tabs under the fields */
.detail-tabs {
    height: 29px;
    margin-right: 17px;
    padding: 0 30px;
    border-top: 1px solid #999;
    background: #f5f6f8;
}
.detail-tabs-inner {
    display: flex;
    height: 25px;
    margin-top: -1px;
    border: 1px dashed #555;
}
.detail-tabs button {
    position: relative;
    height: 23px;
    margin-right: 5px;
    padding: 2px 2px 0 11px;
    border-left: 1px solid #999;
    background: linear-gradient(#e8e8e8, #d4d4d4);
}
.detail-tabs button:first-child {
    border-left: 0;
}
.detail-tabs button::after {
    content: "";
    position: absolute;
    z-index: 1;
    left: 100%;
    top: 0;
    width: 18px;
    height: 23px;
    background: url("data:image/svg+xml,%3Csvg xmlns='http://www.w3.org/2000/svg' width='18' height='23'%3E%3Cpath d='M0 0h18L0 23z' fill='%23dedede'/%3E%3Cpath d='M0 23L18 0' stroke='%23909090'/%3E%3C/svg%3E");
}
.detail-tabs .active {
    z-index: 2;
    padding-top: 0;
    background: #fff;
}
.detail-tabs .active::after {
    background: url("data:image/svg+xml,%3Csvg xmlns='http://www.w3.org/2000/svg' width='18' height='23'%3E%3Cpath d='M0 0h18L0 23z' fill='%23fff'/%3E%3Cpath d='M0 23L18 0' stroke='%23909090'/%3E%3C/svg%3E");
}

.vscroll {
    display: flex;
    flex-direction: column;
    width: 17px;
    border-left: 1px solid #b4b4b4;
}
.vscroll button {
    height: 17px;
    border-bottom: 1px solid #b4b4b4;
}
.vscroll .end {
    border: solid #b4b4b4;
    border-width: 1px 0 0;
}
.vtrack {
    height: 20%;
}
.vthumb {
    flex: 1;
    display: flex;
    align-items: center;
    justify-content: center;
    border-top: 1px solid #a0a0a0;
    background: #dcdcdc;
}

/* fact boxes */
.factbox {
    display: flex;
    gap: 8px;
    width: 214px;
    padding: 3px 7px 0 2px;
    background: #ebf6ff;
}
.splitter {
    align-self: center;
    width: 2px;
    height: 18px;
    background: repeating-linear-gradient(#999 0 2px, transparent 2px 4px);
}
.facts {
    flex: 1;
    min-width: 0;
}
.fact {
    border-bottom: 1px solid #b9cfe5;
}
.fact-head {
    display: flex;
    align-items: center;
    gap: 12px;
    height: 25px;
    padding: 2px 0 0 4px;
}
.fact-head h2 {
    flex: 1;
    font-weight: bold;
    color: #555;
}
.orders {
    width: 100%;
    margin-left: 3px;
    table-layout: fixed;
    border-collapse: collapse;
}
.orders th {
    height: 18px;
    padding: 0 5px;
    border: 1px solid #dcdfe2;
    border-right: 0;
    background: #fcfcfc;
    font-weight: normal;
    text-align: left;
}
.orders th:first-child {
    width: 131px;
}
.orders td {
    height: 21px;
    padding: 0 0 2px 5px;
    color: #444;
    white-space: nowrap;
}
.orders td + td {
    padding-left: 3px;
}
.orders a {
    color: #0066cc;
    text-decoration: none;
}
.orders .more td {
    height: 25px;
    padding: 0 0 4px 3px;
    color: #000;
}

/* status bar */
.statusbar {
    display: flex;
    align-items: center;
    gap: 5px;
    height: 32px;
    padding: 1px 2px 0 15px;
    border-top: 2px solid #969ca5;
    border-bottom: 1px solid #a4bac6;
    background: #dfe7ef;
    color: #333;
}
.record-nav {
    display: flex;
    gap: 13px;
    margin-right: 4px;
}
.sep {
    width: 1px;
    height: 22px;
    background: linear-gradient(#b8c6d6, #17375e 50%, #b8c6d6);
}
.tool {
    display: flex;
    align-items: center;
    justify-content: center;
    width: 24px;
    height: 24px;
}
.help-text {
    flex: 1;
}
.bell {
    margin: 0 3px 0 5px;
}
.company {
    margin-right: 9px;
}
.close {
    width: 74px;
    height: 24px;
    border: 1px solid #6b6b6b;
    background: #dcdcdc;
    color: #000;
}
.grip {
    align-self: flex-end;
}

/* taskbar */
.taskbar {
    display: flex;
    gap: 2px;
    height: 40px;
    border-top: 1px solid #47717f;
    background: #65c9ea;
}
.start {
    width: 50px;
}
.task {
    display: flex;
    align-items: center;
    justify-content: center;
    width: 60px;
}
.task.open {
    border: solid #3c8aa6;
    border-width: 0 1px;
    background: #7cd2ee;
}
.task.active {
    border: 1px solid #2a5566;
    background: #a0def4;
}
.task.stacked {
    box-shadow: inset -4px 0 0 #7cd2ee, inset -5px 0 0 #3c8aa6;
    padding-right: 4px;
}
.tray {
    margin-left: auto;
    display: flex;
    align-items: center;
    gap: 14px;
    padding-right: 14px;
}
.tray time {
    line-height: 17px;
    text-align: center;
}
```
